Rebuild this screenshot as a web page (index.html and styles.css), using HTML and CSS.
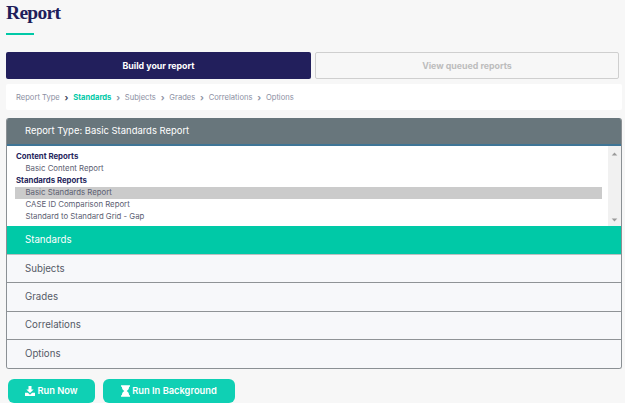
FILE: index.html
```html
<!DOCTYPE html>
<html lang="en">
<head>
<meta charset="utf-8">
<title>Report</title>
<link rel="stylesheet" href="styles.css">
</head>
<body>
<main class="page">
  <h1 class="title">Report</h1>
  <div class="rule"></div>
  <div class="tabs">
    <div class="tab tab-active">Build your report</div>
    <div class="tab tab-idle">View queued reports</div>
  </div>
  <nav class="crumbs">
    <span>Report Type</span><span class="sep sep-dark">›</span>
    <span class="crumb-on">Standards</span><span class="sep">›</span>
    <span>Subjects</span><span class="sep">›</span>
    <span>Grades</span><span class="sep">›</span>
    <span>Correlations</span><span class="sep">›</span>
    <span>Options</span>
  </nav>
  <section class="panel">
    <header class="panel-head">Report Type: Basic Standards Report</header>
    <div class="listbox">
      <div class="list">
        <div class="group">Content Reports</div>
        <div class="item">Basic Content Report</div>
        <div class="group">Standards Reports</div>
        <div class="item item-on">Basic Standards Report</div>
        <div class="item">CASE ID Comparison Report</div>
        <div class="item">Standard to Standard Grid - Gap</div>
      </div>
      <div class="scroll">
        <svg class="arrow" viewBox="0 0 8 5"><path d="M4 0.5 7.5 4.5H.5z"/></svg>
        <svg class="arrow" viewBox="0 0 8 5"><path d="M4 4.5 .5 .5H7.5z"/></svg>
      </div>
    </div>
    <div class="row row-on">Standards</div>
    <div class="row">Subjects</div>
    <div class="row">Grades</div>
    <div class="row">Correlations</div>
    <div class="row row-last">Options</div>
  </section>
  <div class="actions">
    <button class="btn btn-now" type="button">
      <svg class="icon" viewBox="0 0 12 12"><path d="M4.2 0h3.600v4.200H10.400L6 8.400 1.600 4.200H4.200zM0 8.200h3.400L6 10.400 8.600 8.200H12V12H0z"/></svg>Run Now
    </button>
    <button class="btn btn-bg" type="button">
      <svg class="icon icon-glass" viewBox="0 0 10 13"><path d="M0 0h10v1.800H9C9 4.300 7.800 5.600 6.300 6.500 7.800 7.400 9 8.700 9 11.200h1V13H0v-1.800h1C1 8.700 2.200 7.400 3.700 6.500 2.200 5.600 1 4.300 1 1.800H0z"/></svg>Run In Background
    </button>
  </div>
</main>
</body>
</html>
```
FILE: styles.css
```css
* { box-sizing: border-box; }
html, body { margin: 0; height: 403px; overflow: hidden; }
body { background: #f7f7f7; font-family: "Inter", "Liberation Sans", sans-serif; color: #4a4f5c; }
.page { padding: 0 3px 0 6px; }
.title { margin: 0; height: 33px; font: 700 19.500px/26px "Liberation Serif", serif; color: #1f1d5a; letter-spacing: -.7px; }
.rule { width: 28px; height: 2px; background: #00c9a7; margin-bottom: 17px; }
.tabs { display: flex; gap: 4px; padding-right: 3px; }
.tab { flex: 1; height: 27px; display: flex; align-items: center; justify-content: center; font-size: 8.800px; font-weight: 700; border-radius: 2px; }
.tab-active { background: #221f5c; color: #fff; flex-basis: 305px; flex-grow: 0; }
.tab-idle { border: 1px solid #cfcfcf; color: #bdbdbd; }
.crumbs { margin-top: 5px; height: 26px; background: #fff; border-radius: 2px; padding-left: 10px; display: flex; align-items: center; font-size: 7.600px; color: #8c90a3; }
.sep { margin: 0 4.800px; font-weight: 700; font-size: 9px; color: #8c90a3; }
.sep-dark { color: #3a3f55; }
.crumb-on { color: #00c9a7; font-weight: 700; }
.panel { margin-top: 8px; border: 1px solid #8b9094; border-top: 0; border-radius: 3px; overflow: hidden; }
.panel-head { height: 28px; background: #68767c; border-bottom: 2px solid #3f7596; color: #fff; font-size: 9.450px; font-weight: 400; padding: 0 0 1px 18px; display: flex; align-items: center; }
.listbox { height: 80px; background: #fff; display: flex; padding-top: 5px; }
.list { flex: 1; padding: 0 6px 0 8px; font-size: 7.800px; line-height: 11.900px; color: #5c6072; }
.group { font-weight: 700; color: #26265c; padding-left: 1px; }
.item { padding-left: 11px; margin-left: -0.500px; }
.item-on { background: #cbcbcb; }
.scroll { width: 13px; margin-top: -5px; background: #f1f1f1; display: flex; flex-direction: column; justify-content: space-between; align-items: center; padding: 6px 0 4px; }
.arrow { width: 7px; height: 4px; fill: #9a9a9a; }
.row { height: 28.400px; background: #f7f8fa; border-bottom: 1px solid #8f9396; padding: 0 0 1px 18px; display: flex; align-items: center; font-size: 9.700px; color: #555a66; }
.row-on { background: #00c9a7; color: #fff; height: 29px; padding-bottom: 2px; border-bottom-color: #b9c0c0; }
.row-last { border-bottom: 0; height: 27.600px; }
.actions { display: flex; gap: 8px; margin-top: 10px; padding-left: 2px; }
.btn { height: 24px; border: 0; border-radius: 6px; background: #0fd0b4; color: #fff; font: 600 9.300px "Inter", sans-serif; display: flex; align-items: center; justify-content: center; white-space: nowrap; padding: 0; }
.btn-now { width: 87px; }
.btn-bg { width: 132px; }
.icon { width: 10px; height: 10px; fill: #fff; margin-right: 2px; }
.icon-glass { width: 9px; height: 12px; }
```
